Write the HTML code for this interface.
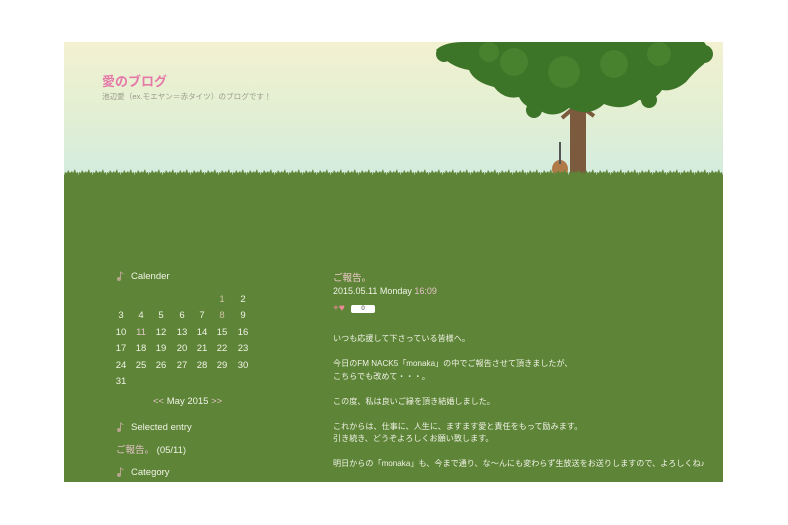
<!DOCTYPE html>
<html><head><meta charset="utf-8"><style>
body{margin:0;background:#fff;width:788px;height:525px;overflow:hidden;font-family:"Liberation Sans","Noto Sans CJK JP",sans-serif;}
#box{position:absolute;left:64px;top:42px;width:659px;height:440px;background:#5d8437;overflow:hidden}
#sky{position:absolute;left:0;top:0;width:659px;height:136px;background:linear-gradient(#f3f1d2,#e3efd2 50%,#d3ecdf)}
.t{position:absolute;color:#f1f3e6;font-size:9.5px;white-space:nowrap}
.cal span{position:absolute;width:20px;text-align:center;color:#f1f3e6;font-size:9.5px}
.note{position:absolute;width:9px;height:10px}
</style></head><body>
<div id="box">
<div id="sky"></div>
<svg width="659" height="150" style="position:absolute;left:0;top:0">
<defs><pattern id="g" width="14" height="8" patternUnits="userSpaceOnUse" x="0" y="126"><path d="M0 8 L1 4 L3 5 L4 2 L6 5 L8 3 L9 5 L11 1 L12 5 L14 4 L14 8Z" fill="#5d8437"/></pattern></defs>
<rect x="506" y="62" width="16" height="76" fill="#7b5a3e"/>
<path d="M512 64 L498 76 M516 64 L530 74" stroke="#7b5a3e" stroke-width="4"/>
<ellipse cx="496" cy="127" rx="8" ry="9" fill="#b07a48"/>
<rect x="495" y="100" width="2" height="22" fill="#555"/>
<g fill="#3c7428">
<path d="M372 8 Q380 0 400 0 L640 0 Q648 10 640 22 Q630 30 622 40 Q610 50 598 48 Q590 60 575 58 Q560 70 540 62 Q525 76 505 66 Q490 78 475 68 Q460 66 455 55 Q440 58 430 45 Q410 40 405 28 Q385 25 372 8Z"/>
<circle cx="380" cy="12" r="8"/><circle cx="640" cy="12" r="9"/><circle cx="470" cy="68" r="8"/><circle cx="585" cy="58" r="8"/>
</g>
<g fill="#4b8630" opacity=".8"><circle cx="450" cy="20" r="14"/><circle cx="500" cy="30" r="16"/><circle cx="550" cy="22" r="14"/><circle cx="595" cy="12" r="12"/><circle cx="425" cy="10" r="10"/></g>
<rect x="0" y="126" width="659" height="8" fill="url(#g)"/>
<rect x="0" y="133" width="659" height="17" fill="#5d8437"/>
</svg>
<div class="t" style="left:38px;top:29px;color:#e57aa9;font-size:13px;font-weight:bold">愛のブログ</div>
<div class="t" style="left:38px;top:49px;color:#9a9a8a;font-size:7.6px">池辺愛（ex.モエヤン＝赤タイツ）のブログです！</div>

<svg class="note" style="left:52px;top:229px" viewBox="0 0 9 10"><circle cx="3" cy="8" r="2" fill="#b6a58c"/><path d="M4.5 8V1l3 2" stroke="#b6a58c" fill="none"/></svg>
<div class="t" style="left:67px;top:229px">Calender</div>
<div class="cal">
<span style="left:148px;top:252px;color:#cfc3a3">1</span><span style="left:169px;top:252px">2</span>
<span style="left:47px;top:268px">3</span><span style="left:67px;top:268px">4</span><span style="left:87px;top:268px">5</span><span style="left:108px;top:268px">6</span><span style="left:128px;top:268px">7</span><span style="left:148px;top:268px;color:#cfc3a3">8</span><span style="left:169px;top:268px">9</span>
<span style="left:47px;top:285px">10</span><span style="left:67px;top:285px;color:#e2c9c6">11</span><span style="left:87px;top:285px">12</span><span style="left:108px;top:285px">13</span><span style="left:128px;top:285px">14</span><span style="left:148px;top:285px">15</span><span style="left:169px;top:285px">16</span>
<span style="left:47px;top:301px">17</span><span style="left:67px;top:301px">18</span><span style="left:87px;top:301px">19</span><span style="left:108px;top:301px">20</span><span style="left:128px;top:301px">21</span><span style="left:148px;top:301px">22</span><span style="left:169px;top:301px">23</span>
<span style="left:47px;top:318px">24</span><span style="left:67px;top:318px">25</span><span style="left:87px;top:318px">26</span><span style="left:108px;top:318px">27</span><span style="left:128px;top:318px">28</span><span style="left:148px;top:318px">29</span><span style="left:169px;top:318px">30</span>
<span style="left:47px;top:334px">31</span>
</div>
<div class="t" style="left:89px;top:354px"><span style="color:#e6c3c8">&lt;&lt;</span> May 2015 <span style="color:#e6c3c8">&gt;&gt;</span></div>
<svg class="note" style="left:52px;top:380px" viewBox="0 0 9 10"><circle cx="3" cy="8" r="2" fill="#b6a58c"/><path d="M4.5 8V1l3 2" stroke="#b6a58c" fill="none"/></svg>
<div class="t" style="left:67px;top:380px">Selected entry</div>
<div class="t" style="left:52px;top:400px"><span style="color:#e6c3c8">ご報告。</span> (05/11)</div>
<svg class="note" style="left:52px;top:425px" viewBox="0 0 9 10"><circle cx="3" cy="8" r="2" fill="#b6a58c"/><path d="M4.5 8V1l3 2" stroke="#b6a58c" fill="none"/></svg>
<div class="t" style="left:67px;top:425px">Category</div>

<div class="t" style="left:269px;top:228px;color:#f0cccc">ご報告。</div>
<div class="t" style="left:269px;top:244px;font-size:9px">2015.05.11 Monday <span style="color:#e6c3c8">16:09</span></div>
<div class="t" style="left:269px;top:261px;color:#f08a9a;font-size:10px">+♥</div>
<div style="position:absolute;left:287px;top:263px;width:24px;height:8px;background:#fff;border-radius:2px;font-size:6px;text-align:center;line-height:8px;color:#333">0</div>
<div class="t" style="left:269px;top:291px;font-size:8.1px;line-height:12.5px">いつも応援して下さっている皆様へ。<br><br>今日のFM NACK5「monaka」の中でご報告させて頂きましたが、<br>こちらでも改めて・・・。<br><br>この度、私は良いご縁を頂き結婚しました。<br><br>これからは、仕事に、人生に、ますます愛と責任をもって励みます。<br>引き続き、どうぞよろしくお願い致します。<br><br>明日からの「monaka」も、今まで通り、な～んにも変わらず生放送をお送りしますので、よろしくね♪</div>
</div>
</body></html>
